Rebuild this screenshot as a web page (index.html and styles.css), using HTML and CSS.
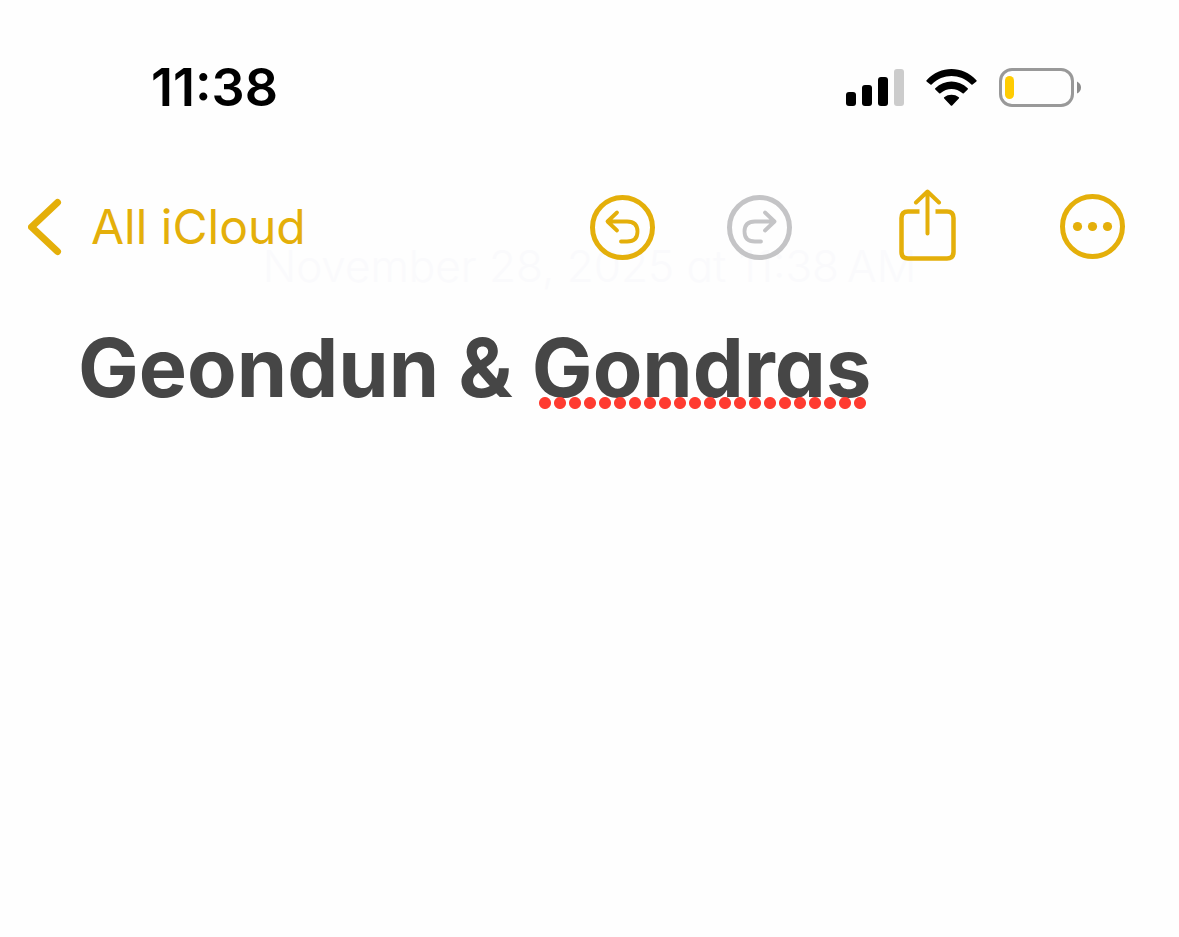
FILE: index.html
```html
<!DOCTYPE html>
<html lang="en">
<head>
<meta charset="utf-8">
<meta name="viewport" content="width=device-width, initial-scale=1">
<title>Notes</title>
<link rel="stylesheet" href="styles.css">
</head>
<body>
<div class="status">
  <time class="clock">11:38</time>
  <div class="indicators">
    <svg class="signal" width="58" height="38" viewBox="0 0 58 38" role="img" aria-label="Signal strength">
      <rect x="0" y="23" width="10" height="14" rx="3"/>
      <rect x="16" y="16" width="10" height="21" rx="3"/>
      <rect x="32" y="8" width="10" height="29" rx="3"/>
      <rect class="faint" x="48" y="0" width="10" height="37" rx="3"/>
    </svg>
    <svg class="wifi" width="51" height="38" viewBox="0 0 51 38" role="img" aria-label="Wi-Fi">
      <path d="M.6 11.2C14.8-3.7 36.2-3.7 50.4 11.2Q51 11.8 50.4 12.4L46.6 15.4Q46 15.9 45.4 15.4C33.8 4.2 17.2 4.2 5.6 15.4Q5 15.9 4.4 15.4L.6 12.4Q0 11.8.6 11.2Z"/>
      <path d="M9.3 19.2C18.5 10.4 32.5 10.4 41.7 19.2Q42.3 19.8 41.7 20.4L37.8 24.2Q37.2 24.8 36.6 24.3C30 18.6 21 18.6 14.4 24.3Q13.8 24.8 13.2 24.2L9.3 20.4Q8.7 19.8 9.3 19.2Z"/>
      <path d="M18.2 28.2C22.4 24.9 28.6 24.9 32.8 28.2Q33.5 28.8 32.8 29.5L26.2 36.4Q25.5 37 24.8 36.4L18.2 29.5Q17.5 28.8 18.2 28.2Z"/>
    </svg>
    <svg class="battery" width="83" height="40" viewBox="0 0 83 40" role="img" aria-label="Battery low">
      <rect class="shell" x="1.5" y="1.5" width="72" height="36" rx="11.5"/>
      <rect class="charge" x="6" y="8" width="9" height="23" rx="4.5"/>
      <path class="cap" d="M78 13.5Q82 15.5 82 19.5T78 25.5Z"/>
    </svg>
  </div>
</div>
<nav class="toolbar">
  <a class="back" href="#">
    <svg width="35" height="60" viewBox="0 0 35 60" aria-hidden="true"><path d="M29.5 5.5 3.5 30 29.5 54.500" stroke-width="7"/></svg>
    <span>All iCloud</span>
  </a>
  <div class="actions">
    <div class="history">
      <button class="tool" type="button" aria-label="Undo">
        <svg width="65" height="65" viewBox="0 0 65 65" aria-hidden="true"><circle cx="32.5" cy="32.5" r="30" stroke-width="5"/><path d="M27 17.5 17.5 26.5 27 35.5M18 26.5H37Q47.5 26.5 47.5 36.5T37 46.5H31" stroke-width="3.8"/></svg>
      </button>
      <button class="tool" type="button" aria-label="Redo" disabled>
        <svg width="65" height="65" viewBox="0 0 65 65" aria-hidden="true"><circle cx="32.5" cy="32.5" r="30" stroke-width="5"/><path d="M38 17.5 47.5 26.5 38 35.5M47 26.5H28Q17.5 26.5 17.5 36.5T28 46.5H34" stroke-width="3.8"/></svg>
      </button>
    </div>
    <button class="tool" type="button" aria-label="Share">
      <svg width="57" height="76" viewBox="0 0 57 76" aria-hidden="true"><path d="M28.5 44.5V3M17 13.5 28.5 2.5 40 13.5" stroke-width="4"/><path class="box" d="M20.5 22.5H9Q2.500 22.500 2.500 29V63Q2.500 69.500 9 69.500H48Q54.500 69.500 54.500 63V29Q54.500 22.500 48 22.500H36.500" stroke-width="4.5"/></svg>
    </button>
    <button class="tool" type="button" aria-label="More">
      <svg width="65" height="67" viewBox="0 0 65 67" aria-hidden="true"><circle cx="32.5" cy="32.5" r="30" stroke-width="5"/><g class="dots"><circle cx="17.5" cy="32.5" r="4.6"/><circle cx="32.5" cy="32.5" r="4.6"/><circle cx="47.5" cy="32.5" r="4.6"/></g></svg>
    </button>
  </div>
</nav>
<main class="note">
  <p class="date">November 28, 2025 at 11:38&#8239;AM</p>
  <h1 class="title">Geondun &amp; <span class="misspelled">Gondras</span></h1>
</main>
</body>
</html>
```
FILE: styles.css
```css
* { box-sizing: border-box; }
body {
  margin: 0;
  background: #fefefe;
  font-family: Inter, "Liberation Sans", sans-serif;
  font-feature-settings: "cv11";
}
.status {
  display: flex;
  justify-content: space-between;
  align-items: center;
  padding: 58px 97px 0 151px;
  color: #000;
}
.clock { font-size: 52px; line-height: 60px; font-weight: 600; }
.indicators { display: flex; align-items: center; gap: 22px; }
.faint { fill: #ccc; }
.shell { fill: none; stroke: #999; stroke-width: 3; }
.charge { fill: #ffcc02; }
.cap { fill: #8c8c8c; }
.toolbar {
  position: relative;
  z-index: 1;
  display: flex;
  justify-content: space-between;
  align-items: center;
  height: 76px;
  margin-top: 71px;
  padding: 0 54px 0 28px;
}
.toolbar svg {
  display: block;
  fill: none;
  stroke: currentColor;
  stroke-linecap: round;
  stroke-linejoin: round;
}
.toolbar .box { stroke-linecap: butt; }
.toolbar .dots { fill: currentColor; stroke: none; }
.back {
  display: flex;
  align-items: center;
  gap: 28px;
  color: #e4af0a;
  font-size: 48px;
  line-height: 60px;
  text-decoration: none;
  white-space: nowrap;
}
.actions { display: flex; align-items: center; gap: 104px; }
.history { display: flex; gap: 72px; margin-right: 3px; }
.tool { padding: 0; border: 0; background: none; color: #e4af0a; }
.tool:disabled { color: #c4c4c6; }
.note { padding: 0 78px; }
.date {
  margin: -25px 0 0;
  color: #fafafc;
  font-size: 44px;
  line-height: 52px;
  font-weight: 300;
  text-align: center;
}
.title {
  margin: 27px 0 0;
  color: #464646;
  font-size: 81px;
  line-height: 98px;
  font-weight: 700;
}
.misspelled { position: relative; }
.misspelled::after {
  content: "";
  position: absolute;
  left: 6px;
  right: 4px;
  bottom: 7px;
  height: 14px;
  background: radial-gradient(circle at 7px 7px, #ff3b30 5.5px, transparent 6.5px) 0 0 / 15px 14px repeat-x;
}
```
